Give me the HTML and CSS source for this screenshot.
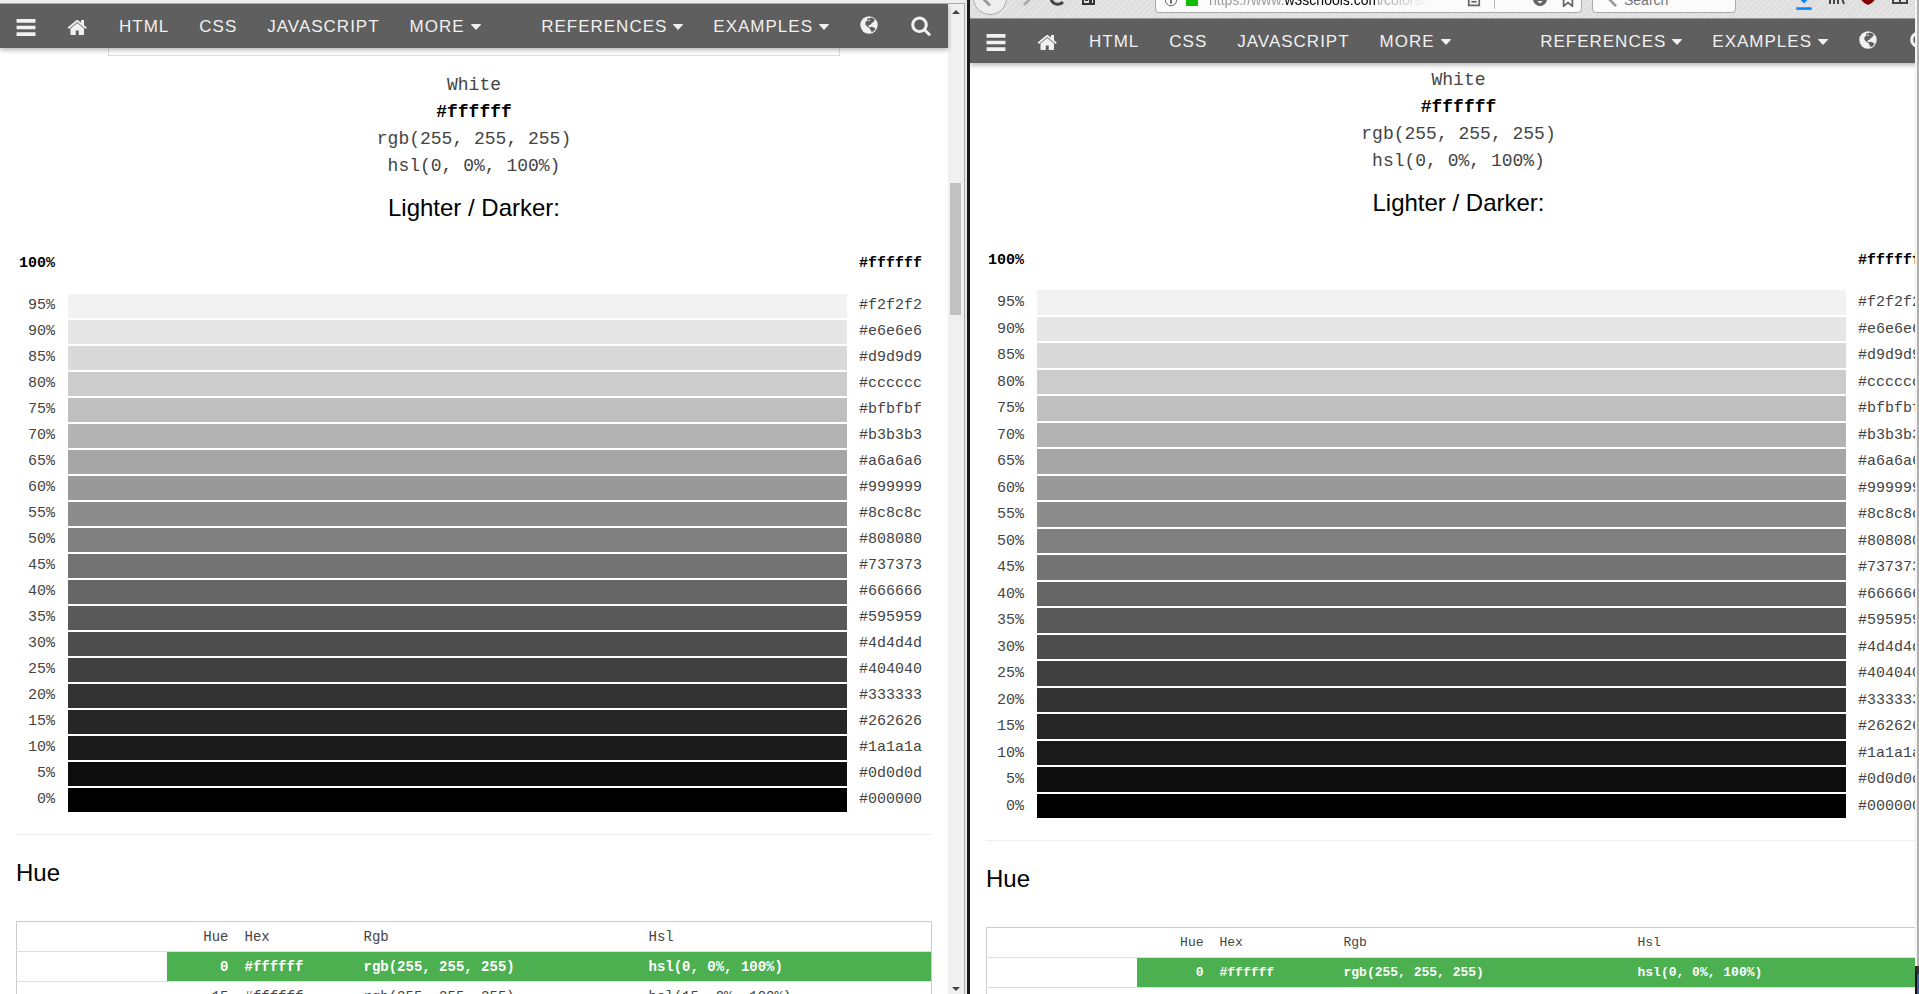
FILE: index.html
```
<!DOCTYPE html>
<html lang="en">
<head>
  <meta charset="UTF-8">
  <meta name="viewport" content="width=device-width, initial-scale=1.0">
  <title>HTML Color Picker</title>
  <link rel="stylesheet" href="styles.css">
</head>
<body>
  <!-- shared icons -->
  <svg class="sprite" aria-hidden="true">
    <symbol id="bars" viewBox="0 0 20 20">
      <path d="M1 2h18v3.400H1zM1 8.300h18v3.400H1zM1 14.600h18V18H1z"/>
    </symbol>
    <symbol id="home" viewBox="0 0 1792 1792">
      <path d="M1408 992v480q0 26-19 45t-45 19h-384v-384h-256v384h-384q-26 0-45-19t-19-45v-480q0-1 .5-3t.5-3l575-474 575 474q1 2 1 6zm223-69l-62 74q-8 9-21 11h-3q-13 0-21-7l-692-577-692 577q-12 8-24 7-13-2-21-11l-62-74q-8-10-7-23.500t11-21.500l719-599q32-26 76-26t76 26l244 204v-195q0-14 9-23t23-9h192q14 0 23 9t9 23v408l219 182q10 8 11 21.500t-7 23.500z"/>
    </symbol>
    <symbol id="globe" viewBox="0 0 18 18">
      <circle cx="9" cy="9" r="8.700"/>
      <path fill="#5f5f5f" d="M7.500 2l1.700.6 1.600-1 2.400.7 2.100 1.700-1.200.4-.5 1.700-1.700.9-1.200 1.500-1.700.7-.8 1.300 1.200.2.600 1.200-1.200-.2-2-1.400-1.600-2 .4-2.300 1.600-1.200zM9.800 11.300l1.600-.6 2 .6 1.300 1 .9.300-1.500 2.300-2.600 1.300-.3-1.500-1.300-1.200z"/>
      <path d="M8.600 3.800l1.500.3-.8 1.200-1.200-.2z"/>
    </symbol>
    <symbol id="search" viewBox="0 0 1792 1792">
      <path d="M1216 832q0-185-131.500-316.500t-316.500-131.500-316.500 131.500-131.500 316.500 131.500 316.500 316.500 131.500 316.500-131.500 131.500-316.500zm512 832q0 52-38 90t-90 38q-54 0-90-38l-343-342q-179 124-399 124-143 0-273.500-55.500t-225-150-150-225-55.500-273.500 55.500-273.500 150-225 225-150 273.500-55.500 273.500 55.500 225 150 150 225 55.500 273.500q0 220-124 399l343 343q37 37 37 90z"/>
    </symbol>
    <symbol id="caret" viewBox="0 0 10 6">
      <path d="M.6 0h8.800q.9.300.3 1L5.500 5.500q-.5.400-1 0L.3 1Q-.3.300.6 0z"/>
    </symbol>
  </svg>

  <section class="window chromium">
    <div class="window-edge"></div>
    <div class="viewport">
      <div class="page">
        <nav class="topnav">
          <a href="#" aria-label="Menu"><svg class="icon"><use href="#bars"/></svg></a>
          <a href="#" aria-label="Home"><svg class="icon"><use href="#home"/></svg></a>
          <a href="#">HTML</a>
          <a href="#">CSS</a>
          <a href="#">JAVASCRIPT</a>
          <a href="#">MORE <svg class="caret"><use href="#caret"/></svg></a>
          <a href="#" class="push">REFERENCES <svg class="caret"><use href="#caret"/></svg></a>
          <a href="#">EXAMPLES <svg class="caret"><use href="#caret"/></svg></a>
          <a href="#" class="tool" aria-label="Translate"><svg class="icon small"><use href="#globe"/></svg></a>
          <a href="#" class="tool" aria-label="Search"><svg class="icon"><use href="#search"/></svg></a>
        </nav>
        <div class="color-box"></div>
        <main class="content">
          <div class="color-info">
            <div>White</div>
            <div><b>#ffffff</b></div>
            <div>rgb(255, 255, 255)</div>
            <div>hsl(0, 0%, 100%)</div>
          </div>
          <h3 class="shade-title">Lighter / Darker:</h3>
          <table class="shades"><tbody></tbody></table>
          <hr>
          <h3>Hue</h3>
          <table class="hues">
            <thead><tr><th></th><th>Hue</th><th>Hex</th><th>Rgb</th><th>Hsl</th></tr></thead>
            <tbody></tbody>
          </table>
        </main>
      </div>
      <div class="scrollbar">
        <svg class="arrow" viewBox="0 0 8 4"><path d="M0 4l4-4 4 4z"/></svg>
        <div class="track"><div class="thumb"></div></div>
        <svg class="arrow" viewBox="0 0 8 4"><path d="M0 0l4 4 4-4z"/></svg>
      </div>
    </div>
  </section>

  <section class="window firefox">
    <div class="toolbar">
      <button class="back" aria-label="Back"><svg viewBox="0 0 34 34"><path d="M17 9l-8 8 8 8" fill="none" stroke="#999" stroke-width="3"/></svg></button>
      <button class="tb" aria-label="Forward"><svg viewBox="0 0 18 18"><path d="M5 1l8 8-8 8" fill="none" stroke="#aaa" stroke-width="3"/></svg></button>
      <button class="tb" aria-label="Reload"><svg viewBox="0 0 18 18"><path d="M14 14A7 7 0 1 1 15 6" fill="none" stroke="#444" stroke-width="3"/></svg></button>
      <button class="tb" aria-label="Home"><svg viewBox="0 0 18 18"><path d="M4 4h11v12H4z" fill="none" stroke="#333" stroke-width="2"/><path d="M6 10h3v3H6zM10 10h3v7h-3z" fill="#333"/></svg></button>
      <div class="urlbar">
        <svg class="tb-icon" viewBox="0 0 16 16"><circle cx="8" cy="8" r="6.500" fill="none" stroke="#555"/><path d="M7 6h2v6H7z" fill="#555"/></svg>
        <span class="secure"></span>
        <input type="text" class="url" aria-label="Address" value="https://www.w3schools.com/colors/c">
        <svg class="tb-icon" viewBox="0 0 16 16"><path d="M2 2h12v12H2z" fill="none" stroke="#666" stroke-width="2"/><path d="M5 9h6v2H5z" fill="#666"/></svg>
        <span class="divider"></span>
        <svg class="tb-icon pocket" viewBox="0 0 16 16"><circle cx="8" cy="7" r="8" fill="#666"/><path d="M5 9l3 3 3-3z" fill="#fff"/></svg>
        <svg class="tb-icon" viewBox="0 0 16 16"><path d="M3 1h10v14l-5-4-5 4z" fill="none" stroke="#666" stroke-width="2"/></svg>
      </div>
      <div class="searchbar">
        <svg class="tb-icon" viewBox="0 0 16 16"><path d="M6 6l9 9" stroke="#999" stroke-width="3"/></svg>
        <input type="text" aria-label="Search the web" placeholder="Search">
      </div>
      <div class="addons">
        <button class="tb" aria-label="Downloads"><svg viewBox="0 0 14 18"><path d="M7 12L2 7h10z" fill="#0a84ff"/><path d="M1 15h12v2H1z" fill="#0a84ff"/></svg></button>
        <button class="tb" aria-label="Library"><svg viewBox="0 0 18 18"><path d="M3 2v14M7 2v14M11 2v14M13 5l4 11" fill="none" stroke="#444" stroke-width="2"/></svg></button>
        <button class="tb" aria-label="Shield"><svg viewBox="0 0 18 18"><path d="M1 2h16v7q-1 5-8 8-7-3-8-8z" fill="#800000"/></svg></button>
        <button class="tb" aria-label="Sidebar"><svg viewBox="0 0 18 18"><path d="M2 3h14v12H2zM9 3v12M9 10h7" fill="none" stroke="#444" stroke-width="2"/></svg></button>
      </div>
    </div>
    <div class="viewport">
      <div class="page">
        <nav class="topnav">
          <a href="#" aria-label="Menu"><svg class="icon"><use href="#bars"/></svg></a>
          <a href="#" aria-label="Home"><svg class="icon"><use href="#home"/></svg></a>
          <a href="#">HTML</a>
          <a href="#">CSS</a>
          <a href="#">JAVASCRIPT</a>
          <a href="#">MORE <svg class="caret"><use href="#caret"/></svg></a>
          <a href="#" class="push">REFERENCES <svg class="caret"><use href="#caret"/></svg></a>
          <a href="#">EXAMPLES <svg class="caret"><use href="#caret"/></svg></a>
          <a href="#" class="tool" aria-label="Translate"><svg class="icon small"><use href="#globe"/></svg></a>
          <a href="#" class="tool" aria-label="Search"><svg class="icon"><use href="#search"/></svg></a>
        </nav>
        <main class="content">
          <div class="color-info">
            <div>White</div>
            <div><b>#ffffff</b></div>
            <div>rgb(255, 255, 255)</div>
            <div>hsl(0, 0%, 100%)</div>
          </div>
          <h3 class="shade-title">Lighter / Darker:</h3>
          <table class="shades"><tbody></tbody></table>
          <hr>
          <h3>Hue</h3>
          <table class="hues">
            <thead><tr><th></th><th>Hue</th><th>Hex</th><th>Rgb</th><th>Hsl</th></tr></thead>
            <tbody></tbody>
          </table>
        </main>
      </div>
    </div>
  </section>
  <div class="desktop-edge"><div class="panel"></div></div>

  <script>
    const shades = [
      "ffffff", "f2f2f2", "e6e6e6", "d9d9d9", "cccccc", "bfbfbf", "b3b3b3",
      "a6a6a6", "999999", "8c8c8c", "808080", "737373", "666666", "595959",
      "4d4d4d", "404040", "333333", "262626", "1a1a1a", "0d0d0d", "000000"
    ];

    document.querySelectorAll(".shades tbody").forEach(body => {
      body.innerHTML = shades.map((hex, i) =>
        `<tr><td class="percent">${100 - i * 5}%</td>` +
        `<td class="bar" style="background-color:#${hex}"></td>` +
        `<td class="hex">#${hex}</td></tr>`
      ).join("");
    });

    document.querySelectorAll(".hues tbody").forEach(body => {
      body.innerHTML = [0, 15].map(hue =>
        `<tr class="${hue === 0 ? "selected" : ""}"><td></td><td>${hue}</td><td>#ffffff</td>` +
        `<td>rgb(255, 255, 255)</td><td>hsl(${hue}, 0%, 100%)</td></tr>`
      ).join("");
    });
  </script>
</body>
</html>
```

FILE: styles.css
```
:root {
  --nav-color: #5f5f5f;
  --nav-text: #f1f1f1;
  --green: #4caf50;
  --mono-text: #444;
  --mono: "Liberation Mono", "Courier New", monospace;
}

* {
  box-sizing: border-box;
}

body {
  margin: 0;
  height: 100vh;
  display: grid;
  grid-template-columns: minmax(0, 967fr) minmax(0, 948fr) 4px;
  overflow: hidden;
  background: #fff;
  color: #000;
  font-family: "Liberation Sans", Arial, sans-serif;
}

.sprite {
  position: absolute;
  width: 0;
  height: 0;
}

.window {
  display: flex;
  flex-direction: column;
  height: 100vh;
  overflow: hidden;
}

.chromium {
  border-right: 2px solid #e8e8e8;
}

.firefox {
  border-left: 3px solid #1a1a1a;
}

.window-edge {
  flex: none;
  height: 4px;
  background: #eee;
  border-bottom: 1px solid #aaa;
}

.viewport {
  flex: 1;
  display: flex;
  min-height: 0;
  overflow: hidden;
}

.page {
  flex: 1;
  min-width: 0;
}

/* the page is wider than its window here */
.firefox .page {
  flex: none;
  width: calc(100% + 32px);
}

/* top navigation */
.topnav {
  display: flex;
  align-items: center;
  position: relative;
  height: 44px;
  background: var(--nav-color);
  box-shadow: 0 2px 5px rgba(0,0,0,0.3);
}

.topnav a {
  display: flex;
  align-items: center;
  gap: 6px;
  padding: 2px 15px 0;
  color: var(--nav-text);
  font-size: 17px;
  letter-spacing: 1px;
  text-decoration: none;
}

.topnav .push {
  margin-left: auto;
}

.topnav .tool {
  padding: 0 16px;
}

.icon {
  width: 22px;
  height: 21px;
  fill: var(--nav-text);
}

.icon.small {
  width: 18px;
  height: 18px;
}

.topnav .tool .icon {
  margin-bottom: 2px;
}

.caret {
  width: 10px;
  height: 6px;
  fill: var(--nav-text);
}

/* page content */
.color-box {
  height: 8px;
  margin: 0 108px;
  border: 1px solid #ddd;
  border-top: none;
}

.content {
  padding: 16px;
}

.firefox .content {
  padding-top: 4px;
}

.color-info {
  color: var(--mono-text);
  font-family: var(--mono);
  font-size: 18px;
  line-height: 27px;
  text-align: center;
}

.color-info b {
  color: #000;
}

h3 {
  margin: 10px 0;
  font-size: 24px;
  font-weight: normal;
  line-height: 36px;
}

.shade-title {
  text-align: center;
}

table {
  width: 100%;
  border-collapse: collapse;
  color: var(--mono-text);
  font-family: var(--mono);
}

td,
th {
  padding: 0;
}

.shades {
  font-size: 15px;
}

.shades tr {
  height: 26px;
}

.shades tr:first-child {
  height: 57px;
  color: #000;
  font-weight: bold;
}

.firefox .shades tr:first-child {
  height: 58px;
}

.firefox .shades tr:nth-child(even) {
  height: 27px;
}

.percent {
  width: 52px;
  padding: 0 13px 2px 0;
  text-align: right;
}

.bar {
  background-clip: padding-box;
  border-bottom: 2px solid #fff;
}

.hex {
  width: 85px;
  padding: 0 0 2px 12px;
}

.firefox .percent,
.firefox .hex {
  padding-bottom: 0;
}

.firefox .percent {
  width: 51px;
}

hr {
  margin: 20px 0;
  border: 0;
  border-top: 1px solid #eee;
}

.hues {
  table-layout: fixed;
  margin-top: 30px;
  border: 1px solid #ccc;
  font-size: 14px;
}

.firefox .hues {
  font-size: 13px;
}

.hues tr {
  height: 30px;
  border-bottom: 1px solid #ddd;
}

.hues th {
  font-weight: normal;
  text-align: left;
}

.hues th,
.hues td {
  padding-left: 8px;
}

.hues th:nth-child(1) {
  width: 150px;
}

.hues th:nth-child(2) {
  width: 70px;
}

.hues th:nth-child(3) {
  width: 119px;
}

.hues th:nth-child(4) {
  width: 285px;
}

.firefox .hues th:nth-child(2) {
  width: 75px;
}

.firefox .hues th:nth-child(3) {
  width: 124px;
}

.firefox .hues th:nth-child(4) {
  width: 294px;
}

.hues th:nth-child(2),
.hues td:nth-child(2) {
  padding-right: 8px;
  text-align: right;
}

.selected td:not(:first-child) {
  background: var(--green);
  color: #fff;
  font-weight: bold;
}

/* scrollbar */
.scrollbar {
  display: flex;
  flex-direction: column;
  align-items: center;
  flex: none;
  width: 17px;
  padding: 6px 1px 3px 0;
  background: #f0f0f0;
  border-right: 1px solid #aaa;
}

.arrow {
  width: 8px;
  height: 4px;
  fill: #444;
}

.track {
  flex: 1;
  width: 11px;
}

.thumb {
  height: 132px;
  margin-top: 169px;
  background: #c1c1c1;
}

/* browser toolbar */
.toolbar {
  display: flex;
  align-items: flex-end;
  flex: none;
  height: 19px;
  padding: 0 6px 5px 3px;
  overflow: hidden;
  border-bottom: 1px solid #999;
  background: repeating-linear-gradient(135deg, #dedede 0 3px, #e8e8e8 3px 4px);
}

.toolbar button {
  flex: none;
  padding: 0;
  border: none;
  background: none;
}

.toolbar svg {
  display: block;
  flex: none;
}

.toolbar .back {
  width: 34px;
  height: 34px;
  margin-bottom: -2px;
  border: 1px solid #aaa;
  border-radius: 50%;
  background: #eee;
}

.toolbar .tb {
  width: 18px;
  height: 18px;
  margin: 0 0 7px 12px;
}

.toolbar .addons .tb {
  margin-left: 14px;
}

.urlbar,
.searchbar {
  display: flex;
  align-items: center;
  flex: none;
  height: 27px;
  border: 1px solid #aaa;
  border-radius: 4px;
  background: #fbfbfb;
}

.urlbar {
  width: 427px;
  margin-left: 58px;
  padding: 0 6px 0 8px;
  gap: 8px;
}

.searchbar {
  width: 144px;
  margin-left: 10px;
  padding: 0 10px;
  gap: 7px;
}

.toolbar input {
  flex: 1;
  min-width: 0;
  padding: 0;
  border: none;
  background: none;
  font-family: inherit;
  font-size: 14px;
  color: #555;
}

/* the host name stands out and the long path fades away */
.toolbar .url {
  margin-left: 3px;
  background: linear-gradient(to right, #999 74px, #000 74px 168px, #999 168px, #fbfbfb 220px);
  -webkit-background-clip: text;
  background-clip: text;
  color: transparent;
}

.tb-icon {
  width: 14px;
  height: 14px;
}

.secure {
  width: 12px;
  height: 12px;
  background: #12bc00;
}

.divider {
  width: 1px;
  height: 18px;
  margin-left: 5px;
  background: #bbb;
}

.pocket {
  margin-left: 30px;
}

.pocket + .tb-icon {
  margin-left: 6px;
}

.addons {
  display: flex;
  margin-left: auto;
}

/* strip of the desktop beside the windows */
.desktop-edge {
  display: flex;
  align-items: flex-end;
  background: linear-gradient(to right, #f4f4f4 2px, #b0b0b0 2px);
}

.panel {
  width: 4px;
  height: 28px;
  background: #3465a4;
  border-top: 8px solid #333;
  border-left: 2px solid #111;
}
```
